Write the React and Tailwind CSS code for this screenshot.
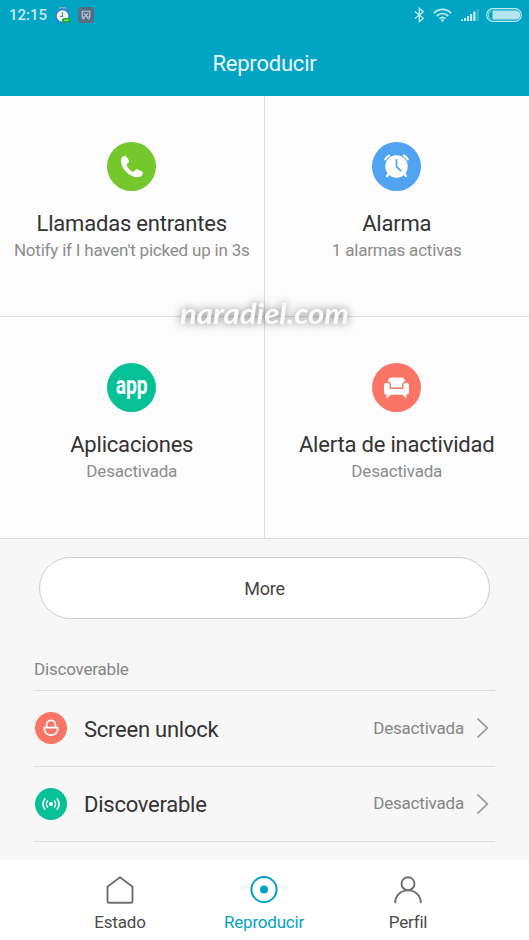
import React, { useState } from 'react';

const features = [
    { title: 'Llamadas entrantes', note: "Notify if I haven't picked up in 3s", color: 'bg-[#75c82b]', icon: <PhoneIcon /> },
    { title: 'Alarma', note: '1 alarmas activas', color: 'bg-[#4fa3f0]', icon: <AlarmIcon /> },
    { title: 'Aplicaciones', note: 'Desactivada', color: 'bg-[#06c195]', icon: <AppLabel /> },
    { title: 'Alerta de inactividad', note: 'Desactivada', color: 'bg-[#fa7565]', icon: <SofaIcon /> },
];

const settings = [
    { title: 'Screen unlock', status: 'Desactivada', color: 'bg-[#fa7565]', icon: <LockIcon /> },
    { title: 'Discoverable', status: 'Desactivada', color: 'bg-[#06c195]', icon: <SignalIcon /> },
];

const App = () => {
    const [tab, setTab] = useState('Reproducir');

    return (
        <div className="flex h-[940px] w-[529px] flex-col overflow-hidden bg-[#f7f7f7] font-['Roboto',sans-serif] text-[#333]">
            <header className="h-24 shrink-0 bg-[#01a4c3]">
                <StatusBar />
                <h1 className="flex h-[66px] items-center justify-center text-[22px] tracking-[-0.2px] text-[#e9f8fc]">Reproducir</h1>
            </header>

            <main className="h-[764px] shrink-0 overflow-hidden">
                <section className="relative grid grid-cols-2 border-b border-[#d9d9d9] bg-[#fcfcfc]">
                    {features.map((item, i) => (
                        <FeatureCard key={item.title} item={item} index={i} />
                    ))}
                    <Watermark />
                </section>

                <div className="px-[39px] pt-[18px]">
                    <button className="h-[62px] w-full rounded-full border border-[#cfcfcf] bg-white text-[18px] tracking-[-0.2px] text-[#444]">
                        More
                    </button>
                </div>

                <section className="mr-[34px] ml-[34px]">
                    <h2 className="flex h-[72px] items-end border-b border-[#dedede] pb-[8px] text-[17px] tracking-[-0.2px] text-[#858585]">
                        Discoverable
                    </h2>
                    {settings.map((item) => (
                        <SettingRow key={item.title} item={item} />
                    ))}
                </section>
            </main>

            <nav className="flex h-20 shrink-0 justify-center bg-white pr-px">
                {['Estado', 'Reproducir', 'Perfil'].map((name) => (
                    <button
                        key={name}
                        className={`flex w-36 flex-col items-center pt-4 text-[17px] leading-5 tracking-[-0.2px] ${tab === name ? 'text-[#01a4c3]' : 'text-[#4a4a4a]'}`}
                        onClick={() => setTab(name)}
                    >
                        <NavIcon name={name} />
                        <span className="mt-[8px]">{name}</span>
                    </button>
                ))}
            </nav>
        </div>
    );
};

const FeatureCard = ({ item, index }) => (
    <div
        className={`flex h-[221px] flex-col items-center border-[#dedede] pt-[46px] ${index % 2 === 0 ? 'border-r' : ''} ${index < 2 ? 'border-b' : ''}`}
    >
        <div className={`flex h-[49px] w-[49px] items-center justify-center rounded-full ${item.color}`}>{item.icon}</div>
        <div className="mt-[18px] text-[22px] leading-[29px] tracking-[-0.2px]">{item.title}</div>
        <div className="text-[17px] leading-6 tracking-[-0.2px] text-[#8c8c8c]">{item.note}</div>
    </div>
);

const SettingRow = ({ item }) => (
    <div className="flex h-[75.5px] items-center border-b border-[#dedede]">
        <div className={`ml-px flex h-8 w-8 items-center justify-center rounded-full ${item.color}`}>{item.icon}</div>
        <div className="ml-[17px] flex-1 pt-[2px] text-[22px] tracking-[-0.25px]">{item.title}</div>
        <div className="text-[17px] tracking-[-0.2px] text-[#858585]">{item.status}</div>
        <svg className="mr-[6px] ml-[12px]" width="13" height="22" viewBox="0 0 13 22" fill="none" stroke="#969696" strokeWidth="1.7">
            <path d="M1.5 1.5 11.3 11 1.5 20.5" />
        </svg>
    </div>
);

const StatusBar = () => (
    <div className="flex h-[30px] items-center text-[#c5ebf3]">
        <span className="ml-[9px] w-[45px] text-[15px] font-medium">12:15</span>
        <svg width="17" height="17" viewBox="0 0 17 17">
            <rect x="5" y="0" width="7" height="3" rx="1" fill="#8fa9b5" />
            <circle cx="8.5" cy="9" r="7.8" fill="#2b82cf" />
            <circle cx="8.5" cy="9" r="5.8" fill="#eff7fb" />
            <path d="M8.5 5.2V9.3H5.8" fill="none" stroke="#6b8294" strokeWidth="1.2" />
            <rect x="8" y="11" width="8.5" height="4.5" rx="2" fill="#16b11d" />
            <path d="M10 13.2h4.5" stroke="#c6f5bd" strokeWidth="1" />
        </svg>
        <svg className="ml-[7px]" width="16" height="16" viewBox="0 0 16 16" fill="none">
            <rect width="16" height="16" rx="3" fill="#526f83" />
            <path d="M5 10H4.2V4.2h7.6V10H11M5.8 6.3l4.2 4.3M10.2 6.3 6 10.6" stroke="#bfd0d9" strokeWidth="1.1" />
            <circle cx="5.5" cy="11" r="1" stroke="#bfd0d9" />
            <circle cx="10.5" cy="11" r="1" stroke="#bfd0d9" />
        </svg>
        <div className="flex-1" />
        <svg width="11" height="16" viewBox="0 0 11 16" fill="none" stroke="currentColor" strokeWidth="1.3">
            <path d="M1 4.5 9.3 11.2 5.3 14.8V1.2L9.3 4.8 1 11.5" />
        </svg>
        <svg className="ml-[8px]" width="19" height="14" viewBox="0 0 19 14" fill="none" stroke="currentColor" strokeWidth="1.8">
            <path d="M.9 5.1c5-4.9 12.2-4.9 17.2 0M3.7 8c3.5-3.3 8.1-3.3 11.6 0M6.5 10.6c1.9-1.6 4.1-1.6 6 0" />
            <circle cx="9.5" cy="12.4" r="1.3" fill="currentColor" stroke="none" />
        </svg>
        <svg className="ml-[9px]" width="18" height="12" viewBox="0 0 18 12" fill="currentColor">
            <path d="M0 10.5h2V12H0zM3 9h2v3H3zM6 7h2v5H6zM9 5h2.2v7H9zM12.3 2.5h2.2V12h-2.2z" />
            <path d="M15.7 0h2v12h-2z" opacity=".3" />
        </svg>
        <svg className="mr-[7px] ml-[7px]" width="36" height="14" viewBox="0 0 36 14">
            <rect x=".6" y=".6" width="34.8" height="12.8" rx="6.4" fill="none" stroke="currentColor" strokeWidth="1.1" />
            <path d="M6.5 2.5h23.3a4.5 4.5 0 0 1 0 9H6.5z" fill="#b5e5ee" />
            <path d="M5 2.7a4.7 4.7 0 0 0 0 8.6" fill="none" stroke="currentColor" strokeWidth=".8" />
        </svg>
    </div>
);

// sits on the crossing of the grid lines
const Watermark = () => (
    <svg className="pointer-events-none absolute top-[190px] left-[169px] drop-shadow-[0_0_4px_rgba(0,0,0,0.5)]" width="192" height="60" viewBox="0 0 192 60">
        <text
            x="11"
            y="38"
            textLength="169"
            lengthAdjust="spacingAndGlyphs"
            fill="#fbfbfb"
            className="font-['Lato','Roboto',cursive] text-[29px] font-bold italic"
        >
            naradiel.com
        </text>
    </svg>
);

function PhoneIcon() {
    return (
        <svg width="49" height="49" viewBox="0 0 49 49" fill="#fff">
            <path d="M16.2 14.2c1.300-.8 2.500-.7 3.200.4l2.400 3.700c.5.8.4 1.500-.3 2.200l-1.500 1.400c-.6.600-.6 1.100-.2 1.900 1.300 2.500 3 4.400 5.400 5.800.8.500 1.300.400 1.900-.300l1.300-1.300c.7-.7 1.400-.8 2.200-.4l4.300 2c1.100.500 1.300 1.300.8 2.400-1 2.300-3.100 3.600-5.800 3.300-8-.9-15.200-8.300-15.900-15.800-.2-2.400.4-4.200 2.200-5.300z" />
        </svg>
    );
}

function AlarmIcon() {
    return (
        <svg width="49" height="49" viewBox="0 0 49 49" fill="none" stroke="#fff" strokeLinecap="round">
            <circle cx="24.5" cy="24.5" r="11.2" fill="#fff" stroke="none" />
            <path d="M13.2 17.5c1-1.8 2.2-3.1 4-4M35.8 17.5c-1-1.8-2.2-3.1-4-4" strokeWidth="2.1" />
            <path d="m16.5 32-1.5 2M32.5 32l1.5 2" strokeWidth="2.2" />
            <path d="M24.5 17.5v7.2l4.3 4.2" stroke="#4fa3f0" strokeWidth="1.7" />
        </svg>
    );
}

function AppLabel() {
    return (
        <svg width="49" height="49" viewBox="0 0 49 49" fill="#fff">
            <text x="8.7" y="31" textLength="32" lengthAdjust="spacingAndGlyphs" className="font-['Roboto',sans-serif] text-[25px] font-bold">
                app
            </text>
        </svg>
    );
}

function SofaIcon() {
    return (
        <svg width="49" height="49" viewBox="0 0 49 49" fill="#fff">
            <path d="M16 18.500c0-2.600 1.500-4 4-4h9c2.500 0 4 1.400 4 4-2 .5-3 1.800-3 4v2H19v-2c0-2.200-1-3.500-3-4z" />
            <path d="M12 22.500a2.800 2.800 0 0 1 5.600 0V26h13.800v-3.500a2.800 2.800 0 0 1 5.600 0v6.700c0 1.500-1 2.500-2.500 2.500H14.500c-1.500 0-2.500-1-2.500-2.500z" />
            <path d="m15.500 31-1.700 3.600h2.500l2.300-3.600zM33.500 31l1.700 3.600h-2.500L30.400 31z" />
        </svg>
    );
}

function LockIcon() {
    return (
        <svg width="32" height="32" viewBox="0 0 32 32" fill="none" stroke="#fff" strokeWidth="1.7" strokeLinejoin="round">
            <path d="M9.300 15.600h13.400v1.400a6.700 6.200 0 0 1-13.400 0zM11.600 15.400v-2.600a4.400 4.500 0 0 1 8.800 0v2.600" />
        </svg>
    );
}

function SignalIcon() {
    return (
        <svg width="32" height="32" viewBox="0 0 32 32" fill="none" stroke="#fff" strokeWidth="1.600">
            <circle cx="16" cy="16" r="2.100" fill="#fff" stroke="none" />
            <path d="M12.900 12.500a5 5 0 0 0 0 7M19.100 12.500a5 5 0 0 1 0 7M10.200 10.200a8.600 8.600 0 0 0 0 11.600M21.800 10.200a8.600 8.600 0 0 1 0 11.600" />
        </svg>
    );
}

const NavIcon = ({ name }) => {
    if (name === 'Estado') {
        return (
            <svg width="28" height="28" viewBox="0 0 28 28" fill="none" stroke="#707070" strokeWidth="1.900" strokeLinejoin="round">
                <path d="M14 1.300 26.500 10.700v14.800a1.300 1.300 0 0 1-1.300 1.300H2.800a1.300 1.300 0 0 1-1.300-1.300V10.700z" />
            </svg>
        );
    }
    if (name === 'Perfil') {
        return (
            <svg width="28" height="28" viewBox="0 0 28 28" fill="none" stroke="#707070" strokeWidth="1.900">
                <circle cx="14" cy="7.700" r="6.500" />
                <path d="M1.300 27.200v-1c0-6.700 5.700-11.800 12.700-11.800s12.700 5.100 12.700 11.800v1" />
            </svg>
        );
    }
    return (
        <svg width="28" height="28" viewBox="0 0 28 28" fill="none" stroke="currentColor" strokeWidth="2">
            <circle cx="14" cy="13.500" r="12.600" />
            <circle cx="14" cy="13.500" r="4" fill="currentColor" stroke="none" />
        </svg>
    );
};

export default App;
